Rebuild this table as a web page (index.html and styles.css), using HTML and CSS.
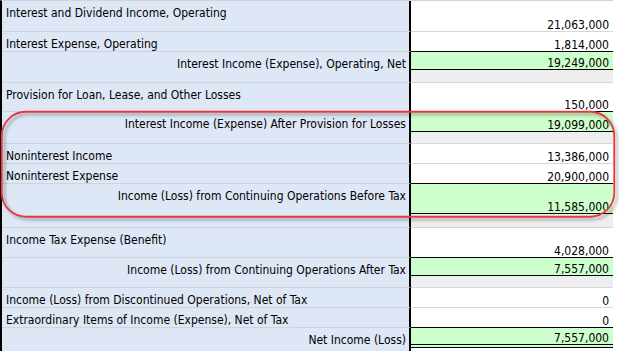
FILE: index.html
```html
<!DOCTYPE html>
<html>
<head>
<meta charset="utf-8">
<link rel="stylesheet" href="styles.css">
</head>
<body>
<div class="page">
  <div class="sheet">
    <div class="l">Interest and Dividend Income, Operating</div>
    <div class="v">21,063,000</div>

    <div class="l">Interest Expense, Operating</div>
    <div class="v k">1,814,000</div>

    <div class="l r span2">Interest Income (Expense), Operating, Net</div>
    <div class="v t">19,249,000</div>
    <div class="s"></div>

    <div class="l">Provision for Loan, Lease, and Other Losses</div>
    <div class="v k">150,000</div>

    <div class="l r span2">Interest Income (Expense) After Provision for Losses</div>
    <div class="v t">19,099,000</div>
    <div class="s"></div>

    <div class="l">Noninterest Income</div>
    <div class="v">13,386,000</div>

    <div class="l">Noninterest Expense</div>
    <div class="v k">20,900,000</div>

    <div class="l r span2">Income (Loss) from Continuing Operations Before Tax</div>
    <div class="v t">11,585,000</div>
    <div class="s"></div>

    <div class="l">Income Tax Expense (Benefit)</div>
    <div class="v k">4,028,000</div>

    <div class="l r span2">Income (Loss) from Continuing Operations After Tax</div>
    <div class="v t">7,557,000</div>
    <div class="s"></div>

    <div class="l">Income (Loss) from Discontinued Operations, Net of Tax</div>
    <div class="v">0</div>

    <div class="l">Extraordinary Items of Income (Expense), Net of Tax</div>
    <div class="v k">0</div>

    <div class="l r span2 last">Net Income (Loss)</div>
    <div class="v t dbl">7,557,000</div>
    <div class="e"></div>
  </div>

  <svg class="callout" width="619" height="351" viewBox="0 0 619 351" aria-hidden="true">
    <defs>
      <filter id="sh" x="-5%" y="-20%" width="110%" height="140%">
        <feDropShadow dx="2.5" dy="2.5" stdDeviation="1.6" flood-color="#000" flood-opacity="0.35"/>
      </filter>
    </defs>
    <rect x="1.75" y="111.75" width="612.5" height="105" rx="24" ry="24"
          fill="none" stroke="#e5393b" stroke-width="1.8" filter="url(#sh)"/>
  </svg>
</div>
</body>
</html>
```

FILE: styles.css
```css
html, body {
  margin: 0;
  padding: 0;
  background: #ffffff;
}

.page {
  position: relative;
  width: 619px;
  height: 351px;
  overflow: hidden;
  font-family: "DejaVu Sans Condensed", "DejaVu Sans", sans-serif;
  font-size: 12px;
  line-height: 14px;
  color: #000;
}

.sheet {
  display: grid;
  grid-template-columns: 409px 202px;
  grid-template-rows: 31px 20px 18px 13px 29px 20px 12px 20px 20px 30px 14px 30px 18px 12px 20px 20px 20px 1fr;
  width: 613px;
  height: 351px;
  box-sizing: border-box;
  border-top: 1px solid #d3d3d3;
  border-left: 2px solid #000;
}

.sheet > div {
  box-sizing: border-box;
  white-space: nowrap;
}

.l {
  background: #dde7f6;
  border-right: 2px solid #000;
  border-bottom: 1px solid #d0d3d8;
  padding: 5px 3px 0 4px;
}

.l.r {
  text-align: right;
}

.l.span2 {
  grid-row: span 2;
}

.l.last {
  border-bottom: none;
}

.v {
  display: flex;
  align-items: flex-end;
  justify-content: flex-end;
  padding-right: 4px;
  line-height: 12px;
  background: #fff;
  border-bottom: 1px solid #d6d6d6;
}

.v.k {
  border-bottom-color: #000;
}

.v.t {
  background: #ccffcc;
  border-bottom: 1px solid #000;
}

.v.t.dbl {
  border-bottom: 4px double #000;
}

.s {
  background: #eeeeee;
  border-bottom: 1px solid #d6d6d6;
}

.e {
  background: #fff;
}

.callout {
  position: absolute;
  left: 0;
  top: 0;
  pointer-events: none;
}
```
